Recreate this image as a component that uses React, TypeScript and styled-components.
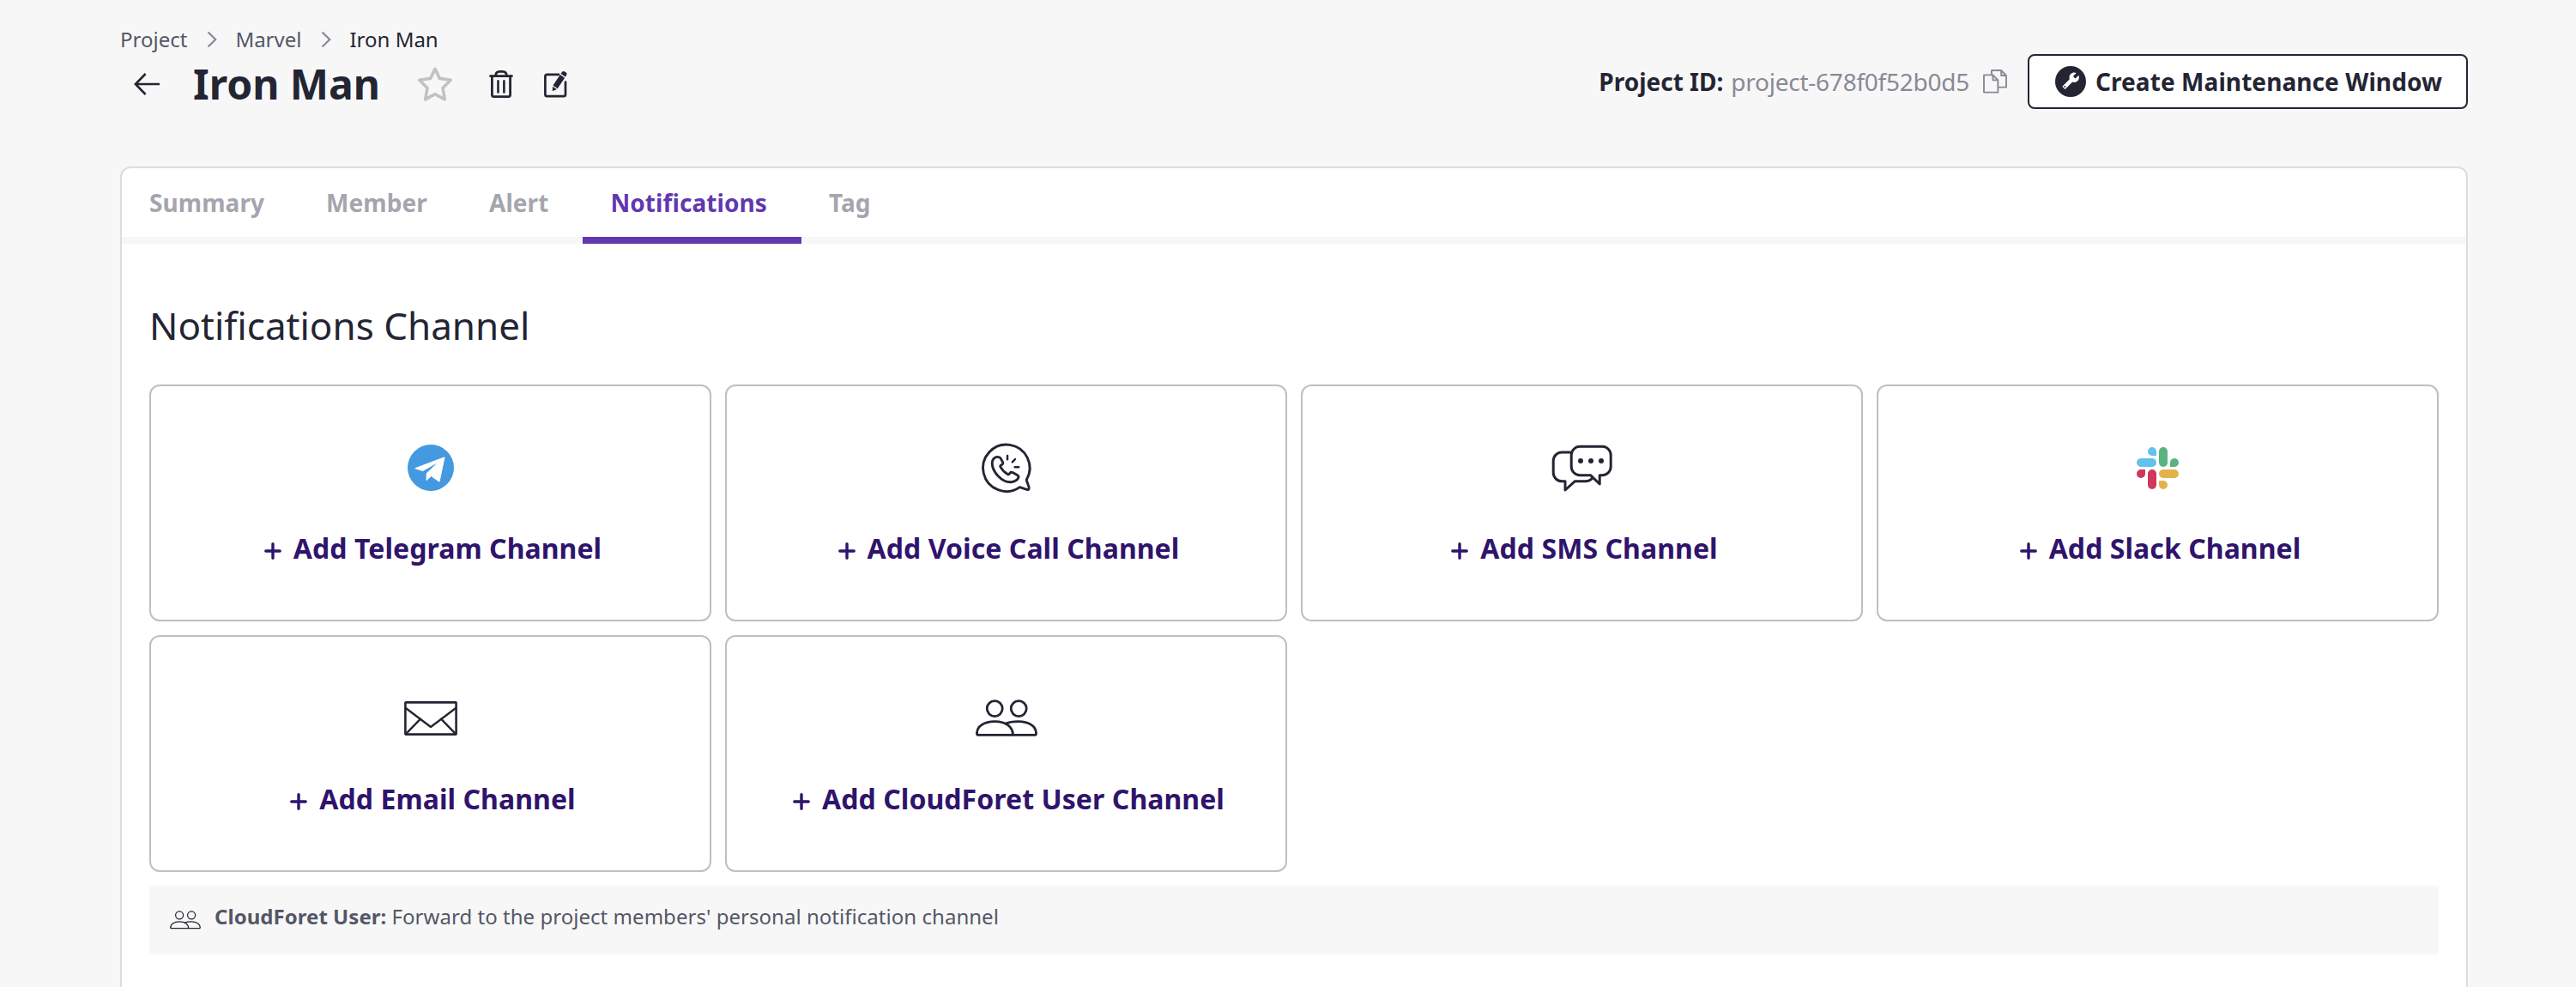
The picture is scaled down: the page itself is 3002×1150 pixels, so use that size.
import React from 'react';
import styled, { createGlobalStyle } from 'styled-components';

const color = {
  page: '#f7f7f7',
  ink: '#232533',
  sub: '#545766',
  muted: '#898995',
  tab: '#a5a5ae',
  star: '#c2c2c6',
  violet: '#6038b0',
  deepViolet: '#2f146c',
  cardLine: '#bfbfc4',
  panelLine: '#dddddf',
};

const GlobalStyle = createGlobalStyle`
  * { box-sizing: border-box; }
  html, body { margin: 0; padding: 0; background: ${color.page}; }
  body {
    font-family: 'Noto Sans', 'Open Sans', sans-serif;
    color: ${color.ink};
    overflow: hidden;
  }
  svg { display: block; flex: none; overflow: visible; }
  button { font: inherit; color: inherit; margin: 0; cursor: pointer; }
`;

const Page = styled.main`
  display: flex;
  flex-direction: column;
  height: 1150px;
  padding: 28px 126px 0 140px;
  overflow: hidden;
`;

const Breadcrumb = styled.nav`
  display: flex;
  align-items: center;
  height: 35px;
  font-size: 24px;
  line-height: 35px;
`;

const Crumb = styled.span<{ $current?: boolean }>`
  color: ${(p) => (p.$current ? color.ink : color.sub)};
`;

const CrumbArrow = styled.svg`
  margin: 1px 21px 0 23px;
`;

const HeaderRow = styled.header`
  display: flex;
  justify-content: space-between;
  height: 64px;
  margin-bottom: 67px;
`;

const TitleGroup = styled.div`
  display: flex;
  align-items: center;
  height: 64px;
  margin-top: 3px;
  padding-left: 16px;
`;

const Title = styled.h1`
  margin: -1px 0 0 37px;
  font-size: 48px;
  line-height: 64px;
  font-weight: 700;
`;

const IconButton = styled.button<{ $gap: number }>`
  display: flex;
  padding: 0;
  border: 0;
  background: none;
  margin-left: ${(p) => p.$gap}px;
`;

const ActionGroup = styled.div`
  display: flex;
  align-items: center;
  font-size: 28px;
  line-height: 40px;
`;

const IdLabel = styled.strong`
  font-weight: 700;
`;

const IdValue = styled.span`
  margin-left: 9px;
  color: ${color.muted};
  letter-spacing: -0.25px;
`;

const MaintenanceButton = styled.button`
  display: flex;
  align-items: center;
  gap: 11px;
  height: 64px;
  margin-left: 24px;
  padding: 0 28px 0 30px;
  border: 2px solid ${color.ink};
  border-radius: 8px;
  background: #fff;
  font-weight: 700;
  letter-spacing: 0.08px;
`;

const Panel = styled.section`
  flex: 1;
  border: 2px solid ${color.panelLine};
  border-bottom: 0;
  border-radius: 12px 12px 0 0;
  background: #fff;
  overflow: hidden;
`;

const TabBar = styled.div`
  display: flex;
  height: 88px;
`;

const Tab = styled.button<{ $active?: boolean }>`
  padding: 0 40px 0 32px;
  border: 0;
  border-bottom: 8px solid ${(p) => (p.$active ? color.violet : color.page)};
  background: none;
  color: ${(p) => (p.$active ? color.violet : color.tab)};
  font-size: 28px;
  line-height: 40px;
  font-weight: 700;
  letter-spacing: 0.08px;
`;

const TabRest = styled.div`
  flex: 1;
  border-bottom: 8px solid ${color.page};
`;

const PanelBody = styled.div`
  padding: 65px 32px 0;
`;

const Heading = styled.h2`
  margin: 0 0 39px;
  font-size: 44px;
  line-height: 60px;
  font-weight: 400;
`;

const CardGrid = styled.div`
  display: grid;
  grid-template-columns: repeat(4, 1fr);
  gap: 16px;
`;

const Card = styled.button`
  display: flex;
  flex-direction: column;
  align-items: center;
  height: 276px;
  padding: 65px 0 0;
  border: 2px solid ${color.cardLine};
  border-radius: 12px;
  background: #fff;
`;

const CardIcon = styled.span`
  display: flex;
  align-items: center;
  justify-content: center;
  height: 60px;
`;

const CardLabel = styled.span`
  display: flex;
  align-items: center;
  gap: 8px;
  margin-top: 40px;
  color: ${color.deepViolet};
  font-size: 32px;
  line-height: 48px;
  font-weight: 700;
  letter-spacing: 0.06px;
`;

const PlusMark = styled.svg`
  margin-top: 6px;
`;

const Notice = styled.aside`
  display: flex;
  align-items: flex-start;
  height: 80px;
  margin-top: 16px;
  padding: 16px 24px;
  background: ${color.page};
  color: ${color.sub};
  font-size: 24px;
  line-height: 40px;
  letter-spacing: 0.035px;
`;

const NoticeIcon = styled.span`
  margin: 13px 16px 0 0;
`;

const line = {
  fill: 'none',
  stroke: color.ink,
  strokeLinecap: 'round' as const,
  strokeLinejoin: 'round' as const,
};

const Chevron = () => (
  <CrumbArrow width="12" height="20" viewBox="0 0 12 20" fill="none" stroke={color.muted} strokeWidth="2.2">
    <path d="M1.5 1.5L10.2 10L1.5 18.5" />
  </CrumbArrow>
);

const BackIcon = () => (
  <svg width="32" height="28" viewBox="0 0 32 28" fill="none" stroke={color.ink} strokeWidth="2.6">
    <path d="M13.6 2L1.9 14L13.6 26M2 14H30" />
  </svg>
);

const StarIcon = () => (
  <svg width="40" height="40" viewBox="0 0 40 40" fill="none" stroke={color.star} strokeWidth="3.6" strokeLinejoin="round">
    <path d="M20 2.3L25.3 13.4L38.2 15.2L29 24.5L31.3 37.8L20 31.7L8.7 37.8L11 24.5L1.8 15.2L14.7 13.4Z" />
  </svg>
);

const TrashIcon = () => (
  <svg width="28" height="32" viewBox="0 0 28 32" {...line} strokeWidth="2.8">
    <path d="M1.5 6.6H26.5M7.5 6.4C7.8 3 9.6 1.4 12 1.4H16C18.4 1.4 20.2 3 20.5 6.4" />
    <path d="M3.4 7V28.6Q3.4 30.6 5.4 30.6H22.6Q24.6 30.6 24.6 28.6V7" />
    <path d="M10.5 12.4V25.4M17.4 12.4V25.4" strokeWidth="2.6" />
  </svg>
);

const EditIcon = () => (
  <svg width="28" height="32" viewBox="0 0 28 32" fill="none">
    <path
      d="M17 4.8H3.6Q1.4 4.8 1.4 7V28Q1.4 30.2 3.6 30.2H22.8Q25 30.2 25 28V13.5"
      stroke={color.ink}
      strokeWidth="2.7"
      strokeLinecap="round"
    />
    <g transform="translate(10 24) rotate(33.8)" fill={color.ink}>
      <path d="M0 0.4L-2.9 -4.4H2.9Z" />
      <path d="M-3.2 -5.6H3.2V-20.6H-3.2Z" />
      <path d="M-3.2 -22H3.2V-24.2Q3.2 -26.6 0.8 -26.6H-0.8Q-3.2 -26.6 -3.2 -24.2Z" />
    </g>
  </svg>
);

const CopyIcon = () => (
  <svg width="28" height="28" viewBox="0 0 28 28" fill="none" stroke={color.muted} strokeWidth="1.9" strokeLinejoin="round">
    <path d="M1 6.4H11.5L17.4 12.4V26.6H1ZM11.5 6.4V12.4H17.4" />
    <path d="M10 6V1H21.2L27 7V20.6H18M21.2 1V7H27" />
  </svg>
);

const WrenchBadge = () => (
  <svg width="36" height="36" viewBox="0 0 36 36">
    <circle cx="18" cy="18" r="18" fill={color.ink} />
    <g transform="translate(28.8 6.6) scale(-0.88 0.88)">
      <path
        fill="#fff"
        d="M22.7 19l-9.1-9.1c.9-2.3.4-5-1.5-6.9-2-2-5-2.4-7.4-1.3L9 6 6 9 1.6 4.7C.4 7.1.9 10.1 2.9 12.1c1.9 1.9 4.6 2.4 6.9 1.5l9.1 9.1c.4.4 1 .4 1.4 0l2.3-2.3c.5-.4.5-1.1.1-1.4z"
      />
      <circle cx="19.8" cy="19.8" r="1.2" fill={color.ink} />
    </g>
  </svg>
);

const Plus = () => (
  <PlusMark width="32" height="32" viewBox="0 0 32 32" fill="none" stroke={color.deepViolet} strokeWidth="3.4" strokeLinecap="round">
    <path d="M16 7.8V24.2M7.8 16H24.2" />
  </PlusMark>
);

const TelegramIcon = () => (
  <svg width="54" height="54" viewBox="0 0 54 54">
    <circle cx="27" cy="27" r="27" fill="#4599e0" />
    <path
      d="M8.8 27.7L43 14.8L37 43.2L27.4 36.6L22 41.6L22.3 33.4L37 19.6L17.6 30.6Z"
      fill="#fff"
      stroke="#fff"
      strokeWidth="1"
      strokeLinejoin="round"
    />
  </svg>
);

const VoiceIcon = () => (
  <svg width="60" height="60" viewBox="0 0 60 60" {...line} strokeWidth="2.9">
    <path d="M45.4 52.6A27.2 27.2 0 1 1 53.2 44.2L56 52.4Q57 56.2 53.6 55.3Z" />
    <path d="M18.8 17.4C16 17.6 13.2 20.6 13.2 24.4C13.2 29.6 16 35 20 39.4C24.6 44.2 30 46.9 35 46.7C39.6 46.4 43.4 43.8 44 41.2C44.3 39.6 43.2 38.9 42 38.2L37.6 35.8C36.2 35 35 35 34.2 36L33 37.4C32.6 37.9 31.8 37.9 31.2 37.5C27.8 35.6 24.8 32.4 22.8 28.9C22.5 28.2 22.6 27.7 23.2 27.3L25 26.1C25.9 25.4 26 24.6 25.5 23.4L23 18.9C22 17.6 20.6 17.3 18.8 17.4Z" />
    <path d="M31 16V20.3M40 20L36.8 23.4M39.6 29.2H44.2" strokeWidth="2.5" />
  </svg>
);

const SmsIcon = () => (
  <svg width="76" height="60" viewBox="0 0 76 60" {...line} strokeWidth="3">
    <path d="M35.2 5.3H61.2A10 10 0 0 1 71.2 15.3V28.7A10 10 0 0 1 61.2 38.7H58.2V49L47.5 38.7H35.2A10 10 0 0 1 25.2 28.7V15.3A10 10 0 0 1 35.2 5.3Z" />
    <path d="M24 12H14.2A10 10 0 0 0 4.2 22V35.8A10 10 0 0 0 14.2 45.8H18V56L29.2 45.8H41.5C45 45.8 47.5 44.6 49.6 42" />
    <g fill={color.ink} stroke="none">
      <circle cx="36" cy="22" r="3" />
      <circle cx="48" cy="22" r="3" />
      <circle cx="60" cy="22" r="3" />
    </g>
  </svg>
);

const SlackIcon = () => (
  <svg width="49" height="49" viewBox="0 0 49 49">
    <g fill="#65c1ec">
      <rect x="0" y="13" width="23" height="10" rx="5" />
      <path d="M23 10H18A5 5 0 1 1 23 5Z" />
    </g>
    <g fill="#5bb381">
      <rect x="26" y="0" width="10" height="23" rx="5" />
      <path d="M39 23V18A5 5 0 1 1 44 23Z" />
    </g>
    <g fill="#e2b34a">
      <rect x="26" y="26" width="23" height="10" rx="5" />
      <path d="M26 39H31A5 5 0 1 1 26 44Z" />
    </g>
    <g fill="#cf375c">
      <rect x="13" y="26" width="10" height="23" rx="5" />
      <path d="M10 26V31A5 5 0 1 1 5 26Z" />
    </g>
  </svg>
);

const EmailIcon = () => (
  <svg width="62" height="40" viewBox="0 0 62 40" {...line} strokeWidth="2.6">
    <rect x="1.4" y="1.4" width="59.2" height="37.2" rx="0.6" />
    <path d="M1.8 8L31 30L60.2 8M19 20.6L2 38.2M43 20.6L60 38.2" strokeWidth="2.4" />
  </svg>
);

const UsersIcon = ({ width = 72, stroke = 2.8 }: { width?: number; stroke?: number }) => (
  <svg width={width} height={(width * 44) / 72} viewBox="0 0 72 44" {...line} strokeWidth={stroke}>
    <circle cx="22.2" cy="10.6" r="9" />
    <circle cx="50.2" cy="10.6" r="9" />
    <path d="M1.5 39.4C1.5 31 10 25.6 22.3 25.6C35.4 25.6 43.4 32 43.4 41.4" />
    <path d="M35 28.2C39 26.2 44 25.6 49.6 25.6C62 25.6 70.5 31 70.5 39.4Q70.5 41.4 68.8 41.4H3.2Q1.5 41.4 1.5 39.4" />
  </svg>
);

const tabs = ['Summary', 'Member', 'Alert', 'Notifications', 'Tag'];

const channels = [
  { name: 'Telegram', icon: <TelegramIcon /> },
  { name: 'Voice Call', icon: <VoiceIcon /> },
  { name: 'SMS', icon: <SmsIcon /> },
  { name: 'Slack', icon: <SlackIcon /> },
  { name: 'Email', icon: <EmailIcon /> },
  { name: 'CloudForet User', icon: <UsersIcon /> },
];

export default function App() {
  return (
    <>
      <GlobalStyle />
      <Page>
        <Breadcrumb>
          <Crumb>Project</Crumb>
          <Chevron />
          <Crumb>Marvel</Crumb>
          <Chevron />
          <Crumb $current>Iron Man</Crumb>
        </Breadcrumb>

        <HeaderRow>
          <TitleGroup>
            <IconButton $gap={0}><BackIcon /></IconButton>
            <Title>Iron Man</Title>
            <IconButton $gap={44}><StarIcon /></IconButton>
            <IconButton $gap={43}><TrashIcon /></IconButton>
            <IconButton $gap={36}><EditIcon /></IconButton>
          </TitleGroup>
          <ActionGroup>
            <IdLabel>Project ID:</IdLabel>
            <IdValue>project-678f0f52b0d5</IdValue>
            <IconButton $gap={16}><CopyIcon /></IconButton>
            <MaintenanceButton>
              <WrenchBadge />
              Create Maintenance Window
            </MaintenanceButton>
          </ActionGroup>
        </HeaderRow>

        <Panel>
          <TabBar>
            {tabs.map((name) => (
              <Tab key={name} $active={name === 'Notifications'}>{name}</Tab>
            ))}
            <TabRest />
          </TabBar>
          <PanelBody>
            <Heading>Notifications Channel</Heading>
            <CardGrid>
              {channels.map(({ name, icon }) => (
                <Card key={name}>
                  <CardIcon>{icon}</CardIcon>
                  <CardLabel>
                    <Plus />
                    Add {name} Channel
                  </CardLabel>
                </Card>
              ))}
            </CardGrid>
            <Notice>
              <NoticeIcon><UsersIcon width={36} stroke={2.5} /></NoticeIcon>
              <span>
                <strong>CloudForet User:</strong> Forward to the project members' personal notification channel
              </span>
            </Notice>
          </PanelBody>
        </Panel>
      </Page>
    </>
  );
}
